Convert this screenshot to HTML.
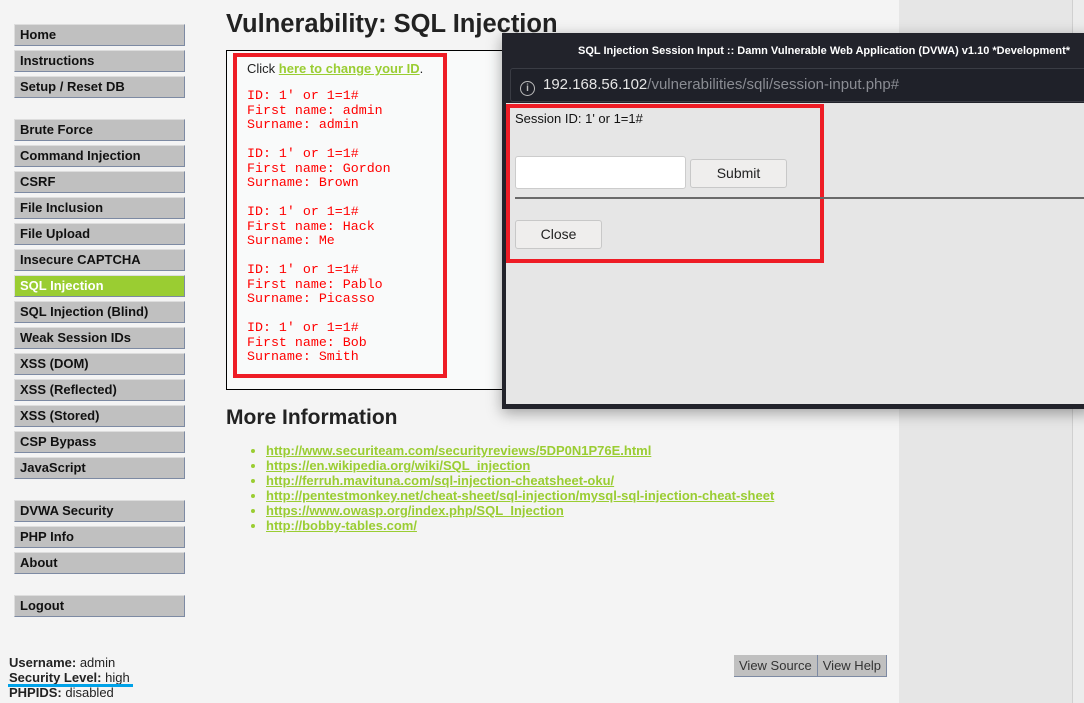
<!DOCTYPE html><html><head><style>
body{margin:0;width:1084px;height:703px;background:#f4f4f4;font-family:"Liberation Sans",sans-serif;position:relative;overflow:hidden}
.m{position:absolute;left:14px;width:164px;height:20px;background:#c0c0c0;border-top:1px solid #ddd;border-left:1px solid #ddd;border-right:1px solid #7d8aa3;border-bottom:1px solid #7d8aa3;font-weight:bold;font-size:13px;line-height:20px;padding-left:5px;box-sizing:content-box;color:#111}
.sel{background:#9acd32;color:#fff}
.a{position:absolute}
pre{margin:0;font-family:"Liberation Mono",monospace;font-size:13.3px;line-height:14.5px;color:#f00}
.lk{color:#9acd32;font-weight:bold;text-decoration:underline}
ul{margin:0;padding-left:40px;font-size:13px;line-height:15px}
</style></head><body>
<div class="m" style="top:24px">Home</div>
<div class="m" style="top:50px">Instructions</div>
<div class="m" style="top:76px">Setup / Reset DB</div>
<div class="m" style="top:119px">Brute Force</div>
<div class="m" style="top:145px">Command Injection</div>
<div class="m" style="top:171px">CSRF</div>
<div class="m" style="top:197px">File Inclusion</div>
<div class="m" style="top:223px">File Upload</div>
<div class="m" style="top:249px">Insecure CAPTCHA</div>
<div class="m sel" style="top:275px">SQL Injection</div>
<div class="m" style="top:301px">SQL Injection (Blind)</div>
<div class="m" style="top:327px">Weak Session IDs</div>
<div class="m" style="top:353px">XSS (DOM)</div>
<div class="m" style="top:379px">XSS (Reflected)</div>
<div class="m" style="top:405px">XSS (Stored)</div>
<div class="m" style="top:431px">CSP Bypass</div>
<div class="m" style="top:457px">JavaScript</div>
<div class="m" style="top:500px">DVWA Security</div>
<div class="m" style="top:526px">PHP Info</div>
<div class="m" style="top:552px">About</div>
<div class="m" style="top:595px">Logout</div>
<div class="a" style="left:9px;top:655px;font-size:13px;line-height:15px;color:#222"><b>Username:</b> admin<br><b>Security Level:</b> high<br><b>PHPIDS:</b> disabled</div>
<div class="a" style="left:8px;top:684px;width:125px;height:3px;background:#00a2e8"></div>
<div class="a" style="left:899px;top:0;width:185px;height:703px;background:#e6e6e6"></div>
<div class="a" style="left:1072px;top:0;width:1px;height:703px;background:#d0d0d0"></div>
<div class="a" style="left:1073px;top:0;width:11px;height:703px;background:#ececec"></div>
<div class="a" style="left:226px;top:10px;font-size:25.5px;font-weight:bold;color:#222">Vulnerability: SQL Injection</div>
<div class="a" style="left:226px;top:50px;width:300px;height:338px;border:1px solid #000;background:#f9fafa"></div>
<div class="a" style="left:233px;top:53px;width:206px;height:317px;border:4px solid #ee1c25"></div>
<div class="a" style="left:247px;top:61px;font-size:13px;color:#222">Click <span class="lk">here to change your ID</span>.</div>
<pre class="a" style="left:247px;top:89px">ID: 1' or 1=1#
First name: admin
Surname: admin

ID: 1' or 1=1#
First name: Gordon
Surname: Brown

ID: 1' or 1=1#
First name: Hack
Surname: Me

ID: 1' or 1=1#
First name: Pablo
Surname: Picasso

ID: 1' or 1=1#
First name: Bob
Surname: Smith</pre>
<div class="a" style="left:226px;top:406px;font-size:21px;font-weight:bold;color:#222">More Information</div>
<ul class="a" style="left:226px;top:443px;color:#222"><li class="lk">http://www.securiteam.com/securityreviews/5DP0N1P76E.html</li><li class="lk">https://en.wikipedia.org/wiki/SQL_injection</li><li class="lk">http://ferruh.mavituna.com/sql-injection-cheatsheet-oku/</li><li class="lk">http://pentestmonkey.net/cheat-sheet/sql-injection/mysql-sql-injection-cheat-sheet</li><li class="lk">https://www.owasp.org/index.php/SQL_Injection</li><li class="lk">http://bobby-tables.com/</li></ul>
<div class="a" style="left:734px;top:655px;height:22px;display:flex;font-size:13px;line-height:22px;color:#333">
<div style="background:#c0c0c0;padding:0 5px;border-right:1px solid #7d8aa3;border-bottom:1px solid #7d8aa3">View Source</div>
<div style="background:#c0c0c0;padding:0 5px;border-right:1px solid #7d8aa3;border-bottom:1px solid #7d8aa3">View Help</div></div>
<div class="a" style="left:502px;top:33px;width:590px;height:376px;background:#22232b;box-shadow:0 4px 14px rgba(0,0,0,.35)"></div>
<div class="a" style="left:578px;top:37px;width:506px;height:29px;color:#fff;font-family:'Liberation Sans',sans-serif;font-weight:bold;font-size:11px;line-height:29px;white-space:nowrap;overflow:hidden">SQL Injection Session Input :: Damn Vulnerable Web Application (DVWA) v1.10 *Development*</div>
<div class="a" style="left:510px;top:68px;width:580px;height:32px;background:#1f2129;border:1px solid #3a3c44;border-radius:3px;font-size:15px;line-height:32px;color:#8a8c93;white-space:nowrap"><span style="display:inline-block;width:13px;height:13px;border:1.5px solid #bbb;border-radius:50%;vertical-align:-2px;margin:0 8px 0 9px;font-size:10px;line-height:13px;text-align:center;color:#bbb;font-weight:bold">i</span><span style="color:#e6e6e6">192.168.56.102</span>/vulnerabilities/sqli/session-input.php#</div>
<div class="a" style="left:506px;top:103px;width:578px;height:301px;background:#e6e6e6"></div>
<div class="a" style="left:506px;top:104px;width:310px;height:151px;border:4px solid #ee1c25"></div>
<div class="a" style="left:515px;top:111px;font-size:13px;color:#111">Session ID: 1' or 1=1#</div>
<div class="a" style="left:515px;top:156px;width:169px;height:31px;background:#fff;border:1px solid #ccc;border-radius:3px"></div>
<div class="a" style="left:690px;top:159px;width:95px;height:27px;background:#efeeed;border:1px solid #c8c8c8;border-radius:3px;font-size:14px;line-height:27px;text-align:center;color:#222">Submit</div>
<div class="a" style="left:515px;top:197px;width:569px;height:2px;background:#6a6a6a"></div>
<div class="a" style="left:515px;top:220px;width:85px;height:27px;background:#efeeed;border:1px solid #c8c8c8;border-radius:3px;font-size:14px;line-height:27px;text-align:center;color:#222">Close</div>
</body></html>
